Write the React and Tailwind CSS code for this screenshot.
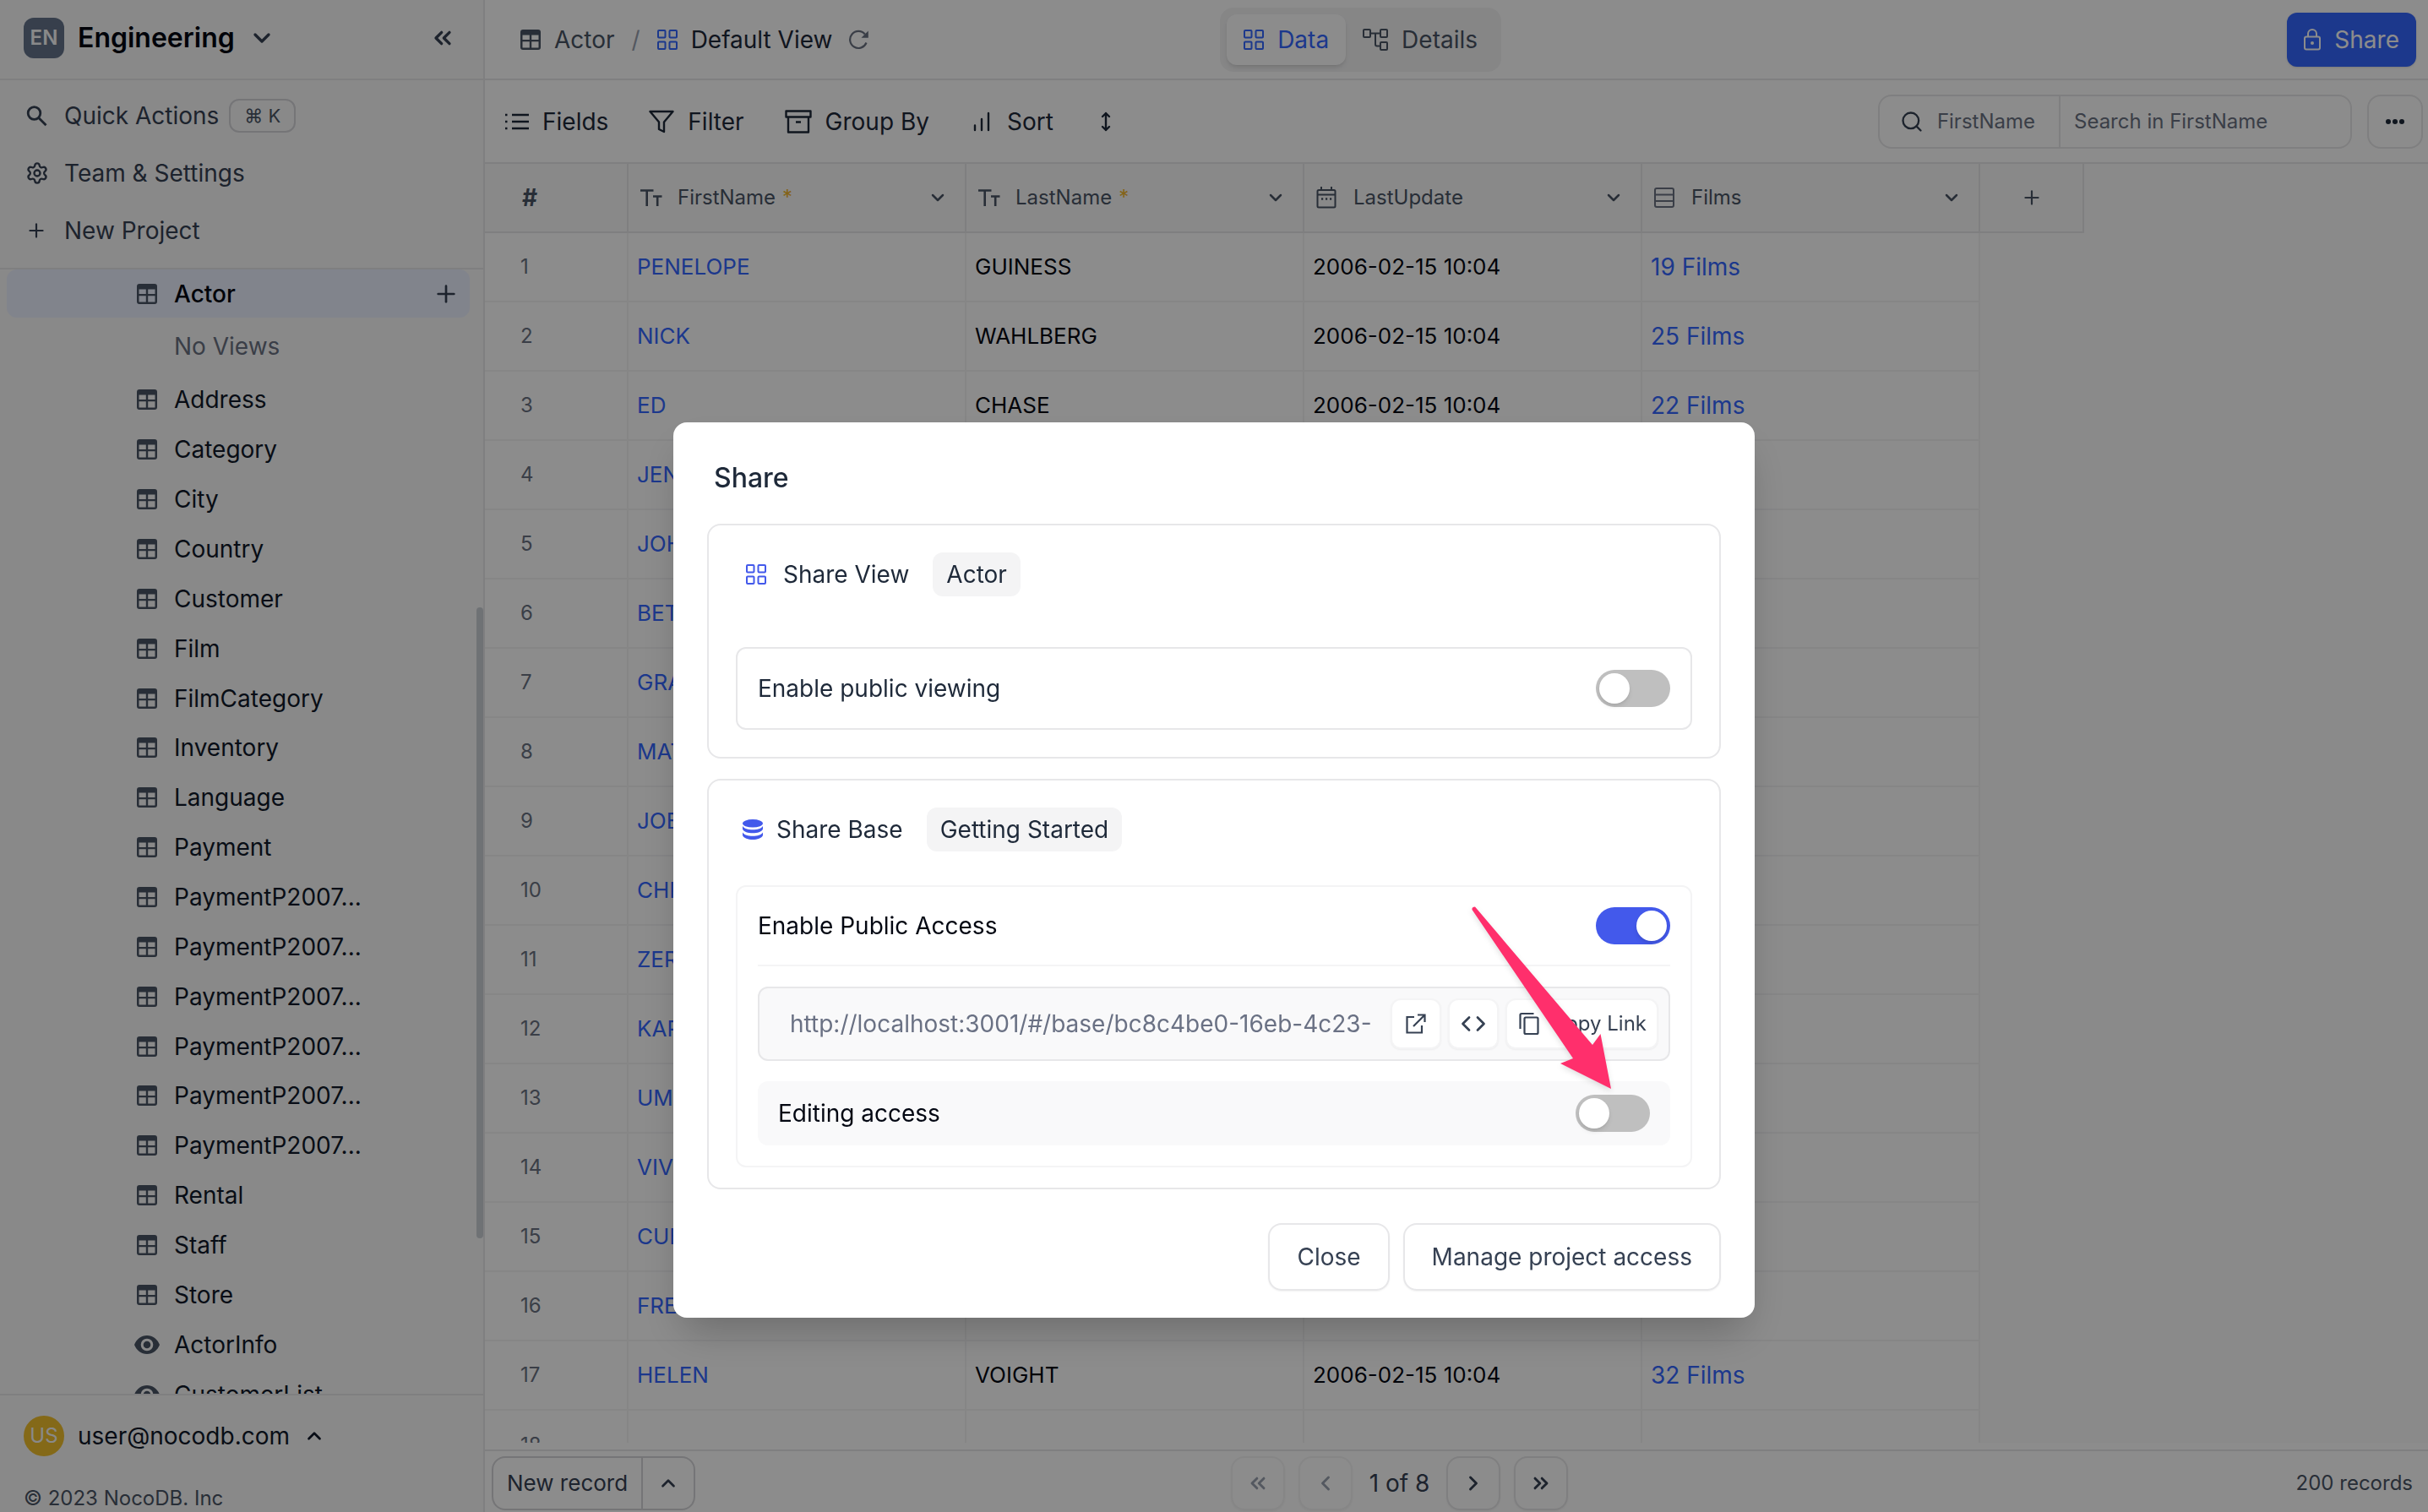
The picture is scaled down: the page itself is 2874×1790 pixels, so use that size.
import { useState } from "react";
import {
  ChevronDown,
  ChevronLeft,
  ChevronRight,
  ChevronUp,
  ChevronsLeft,
  ChevronsRight,
  Code,
  Plus,
  Search,
  Settings,
} from "lucide-react";

const tables = [
  "Address",
  "Category",
  "City",
  "Country",
  "Customer",
  "Film",
  "FilmCategory",
  "Inventory",
  "Language",
  "Payment",
  "PaymentP2007...",
  "PaymentP2007...",
  "PaymentP2007...",
  "PaymentP2007...",
  "PaymentP2007...",
  "PaymentP2007...",
  "Rental",
  "Staff",
  "Store",
];

const views = ["ActorInfo", "CustomerList"];

const actors = [
  ["PENELOPE", "GUINESS", 19],
  ["NICK", "WAHLBERG", 25],
  ["ED", "CHASE", 22],
  ["JENNIFER", "DAVIS", 22],
  ["JOHNNY", "LOLLOBRIGIDA", 29],
  ["BETTE", "NICHOLSON", 20],
  ["GRACE", "MOSTEL", 30],
  ["MATTHEW", "JOHANSSON", 20],
  ["JOE", "SWANK", 25],
  ["CHRISTIAN", "GABLE", 22],
  ["ZERO", "CAGE", 25],
  ["KARL", "BERRY", 31],
  ["UMA", "WOOD", 35],
  ["VIVIEN", "BERGEN", 30],
  ["CUBA", "OLIVIER", 28],
  ["FRED", "COSTNER", 27],
  ["HELEN", "VOIGHT", 32],
];

function TableIcon() {
  return (
    <svg viewBox="0 0 24 24" className="w-6 h-6 shrink-0" fill="currentColor">
      <path
        fillRule="evenodd"
        d="M3 0h18a3 3 0 0 1 3 3v18a3 3 0 0 1-3 3H3a3 3 0 0 1-3-3V3a3 3 0 0 1 3-3ZM2.500 6.500v5.500h8.300V6.500Zm10.700 0v5.500h8.300V6.500ZM2.500 14.300V21a.6.6 0 0 0 .6.6h7.700v-7.300Zm10.700 0v7.300h7.700a.6.6 0 0 0 .6-.6v-6.700Z"
      />
    </svg>
  );
}

function EyeIcon() {
  return (
    <svg viewBox="0 0 30 22" className="w-[30px] h-[22px] shrink-0" fill="currentColor">
      <path
        fillRule="evenodd"
        d="M15 0C8.200 0 2.400 4.500 0 11c2.400 6.500 8.200 11 15 11s12.600-4.500 15-11C27.600 4.500 21.800 0 15 0Zm0 18.300a7.300 7.300 0 1 1 0-14.600 7.300 7.300 0 0 1 0 14.600Z"
      />
      <circle cx="15" cy="11" r="4.300" />
    </svg>
  );
}

function QuickSearchIcon() {
  return (
    <svg viewBox="0 0 26 26" className="w-[26px] h-[26px] shrink-0" fill="none" stroke="currentColor" strokeWidth="2.800">
      <circle cx="10.500" cy="10" r="7.300" />
      <path d="m15.500 15.300 9 9" />
    </svg>
  );
}

function GridIcon() {
  return (
    <svg viewBox="0 0 24 24" className="w-6 h-6 shrink-0" fill="none" stroke="currentColor" strokeWidth="2">
      <rect x="1" y="1" width="8.500" height="8.500" rx="1" />
      <rect x="14.500" y="1" width="8.500" height="8.500" rx="1" />
      <rect x="1" y="14.500" width="8.500" height="8.500" rx="1" />
      <rect x="14.500" y="14.500" width="8.500" height="8.500" rx="1" />
    </svg>
  );
}

function DetailsIcon() {
  return (
    <svg viewBox="0 0 30 26" className="w-[30px] h-[26px] shrink-0" fill="none" stroke="currentColor" strokeWidth="2">
      <rect x="1" y="1" width="8" height="9" rx="1" />
      <rect x="21" y="1" width="8" height="9" rx="1" />
      <rect x="21" y="16" width="8" height="9" rx="1" />
      <path d="M9 5.500h12M15 5.500v13a2 2 0 0 0 2 2h4" />
    </svg>
  );
}

function ReloadIcon() {
  return (
    <svg viewBox="0 0 24 24" className="w-6 h-6 shrink-0" fill="none" stroke="currentColor" strokeWidth="2.200">
      <path d="M20.500 15.500A10 10 0 1 1 18.800 5.500" />
      <path d="M22.800 1.500v8.300h-8.300Z" fill="currentColor" stroke="none" />
    </svg>
  );
}

function FieldsIcon() {
  return (
    <svg viewBox="0 0 28 20" className="w-7 h-5 shrink-0" fill="none" stroke="currentColor" strokeWidth="2.400">
      <path d="M8 2h20M8 10h20M8 18h20M0 2h2.500M0 10h2.500M0 18h2.500" />
    </svg>
  );
}

function FilterIcon() {
  return (
    <svg viewBox="0 0 30 28" className="w-[30px] h-7 shrink-0" fill="none" stroke="currentColor" strokeWidth="2.400" strokeLinejoin="round">
      <path d="M1.500 2h27L18 14.500V26l-6-3v-8.500Z" />
    </svg>
  );
}

function GroupIcon() {
  return (
    <svg viewBox="0 0 32 28" className="w-8 h-7 shrink-0" fill="none" stroke="currentColor" strokeWidth="2.400" strokeLinejoin="round">
      <path d="M1.500 1.500h29v7h-29ZM4 8.500h24v18H4ZM13 14.500h6" />
    </svg>
  );
}

function SortIcon() {
  return (
    <svg viewBox="0 0 28 24" className="w-7 h-6 shrink-0" fill="none" stroke="currentColor" strokeWidth="2.400" strokeLinecap="round">
      <path d="M6 16.500V22M14 9v13M22 2v20" />
    </svg>
  );
}

function RowHeightIcon() {
  return (
    <svg viewBox="0 0 28 24" className="w-7 h-6 shrink-0" fill="none" stroke="currentColor" strokeWidth="2.400" strokeLinecap="round" strokeLinejoin="round">
      <path d="M14 2v20M10 6l4-4 4 4M10 18l4 4 4-4" />
    </svg>
  );
}

function TextTypeIcon() {
  return (
    <svg viewBox="0 0 26 20" className="w-[26px] h-5 shrink-0" fill="none" stroke="currentColor" strokeWidth="2.600">
      <path d="M0 1.500h15.500M7.700 1.500V20M15 8.500h10.500M20.200 8.500V20" />
    </svg>
  );
}

function CalendarIcon() {
  return (
    <svg viewBox="0 0 24 26" className="w-6 h-[26px] shrink-0" fill="none" stroke="currentColor" strokeWidth="2">
      <rect x="1.500" y="4" width="21" height="20.500" rx="1.500" />
      <path d="M1.500 9.500h21M6 0v4M18 0v4" />
      <path d="M6 14.500h2.200M11 14.500h2.200M16 14.500h2.200" strokeWidth="2.400" />
    </svg>
  );
}

function LinkTypeIcon() {
  return (
    <svg viewBox="0 0 24 24" className="w-6 h-6 shrink-0 text-gray-500" fill="none" stroke="currentColor" strokeWidth="2">
      <rect x="1" y="1" width="22" height="22" rx="2" />
      <path d="M1 8.500h22M1 16h22" />
    </svg>
  );
}

function LockIcon() {
  return (
    <svg viewBox="0 0 20 26" className="w-5 h-[26px] shrink-0" fill="none" stroke="currentColor" strokeWidth="2">
      <rect x="1" y="9.500" width="18" height="15" rx="2" />
      <path d="M5 9.500V6a5 5 0 0 1 10 0v3.500" />
      <circle cx="10" cy="17" r="2" fill="currentColor" stroke="none" />
    </svg>
  );
}

function DatabaseIcon() {
  return (
    <svg viewBox="0 0 24 24" className="w-6 h-6 shrink-0" fill="currentColor">
      <ellipse cx="12" cy="4.800" rx="12" ry="4.800" />
      <path d="M0 8c2 3 6.500 4.300 12 4.300S22 11 24 8v3.500c-1.500 3.300-6.500 4.800-12 4.800S1.500 14.800 0 11.500Z" />
      <path d="M0 15.500c2 3 6.500 4.300 12 4.300s10-1.300 12-4.300V19c-1.500 3.300-6.500 5-12 5S1.500 22.300 0 19Z" />
    </svg>
  );
}

function OpenIcon() {
  return (
    <svg viewBox="0 0 24 24" className="w-6 h-6 shrink-0" fill="none" stroke="currentColor" strokeWidth="2.200">
      <path d="M10 4H1.500v18.500H19V14M9 15 22.500 1.500M14 1.500h8.500V10" />
    </svg>
  );
}

function CopyIcon() {
  return (
    <svg viewBox="0 0 28 28" className="w-7 h-7 shrink-0" fill="none" stroke="currentColor" strokeWidth="2.200">
      <rect x="8.500" y="6.500" width="16" height="19.500" rx="1.500" />
      <path d="M3.500 20V3.500a1.500 1.500 0 0 1 1.500-1.500h14.500" />
    </svg>
  );
}

function SidebarAction({ icon, label, children }) {
  return (
    <button type="button" className="flex items-center h-[68px] pl-[30px] text-left">
      {icon}
      <span className="ml-5">{label}</span>
      {children}
    </button>
  );
}

function TreeRow({ icon, label }) {
  return (
    <a href="#" className="flex items-center pl-[154px] gap-5 text-gray-900">
      <span className="flex justify-center w-6 text-gray-600">{icon}</span>
      {label}
    </a>
  );
}

function Sidebar() {
  return (
    <aside className="flex flex-col w-[574px] shrink-0 bg-[#f9f9fa] border-r-2 border-[#e7e7e9] text-[28px] leading-9 text-gray-700">
      <div className="flex items-center h-[95px] shrink-0 border-b-2 border-[#e7e7e9] pl-7 pr-8 pb-1">
        <span className="flex items-center justify-center w-12 h-12 rounded-xl bg-[#64748b] text-[24px] font-semibold text-[#f9f9fa]">
          EN
        </span>
        <button type="button" className="flex items-center ml-4 gap-4 text-[32px] font-semibold text-gray-950">
          Engineering
          <ChevronDown size={32} strokeWidth={2.5} className="text-gray-700" />
        </button>
        <button type="button" aria-label="Collapse sidebar" className="ml-auto">
          <ChevronsLeft size={32} strokeWidth={2.5} />
        </button>
      </div>

      <div className="flex flex-col shrink-0 h-56 pt-2 border-b-2 border-[#e7e7e9]">
        <SidebarAction icon={<QuickSearchIcon />} label="Quick Actions">
          <kbd className="flex items-center h-10 ml-3 px-4 border-2 border-[#d5d5d9] rounded-xl font-[Inter] text-[22px] text-gray-600">
            ⌘ K
          </kbd>
        </SidebarAction>
        <SidebarAction icon={<Settings size={28} className="-mr-0.5" />} label="Team & Settings" />
        <SidebarAction icon={<Plus size={26} />} label="New Project" />
      </div>

      <nav className="relative flex-1 min-h-0 overflow-hidden pl-2 pr-4">
        <div className="flex items-center h-[57px] rounded-xl bg-[#ebf0ff] pr-3">
          <a href="#" className="flex flex-1 items-center gap-5 pl-[154px] font-medium text-gray-950">
            <span className="text-gray-600">
              <TableIcon />
            </span>
            Actor
          </a>
          <button type="button" aria-label="Add view">
            <Plus size={32} />
          </button>
        </div>
        <p className="flex items-center h-[68px] pl-[198px] text-gray-500">No Views</p>
        <div className="grid auto-rows-fr h-[1236px]">
          {tables.map((name, i) => (
            <TreeRow key={i} icon={<TableIcon />} label={name} />
          ))}
          {views.map((name) => (
            <TreeRow key={name} icon={<EyeIcon />} label={name} />
          ))}
        </div>
        <div className="absolute right-0 top-[400px] w-2 h-[747px] rounded-full bg-[#cbd0d6]" />
      </nav>

      <div className="shrink-0 h-[140px] border-t-2 border-[#e7e7e9] pl-7">
        <button type="button" className="flex items-center h-24 text-gray-900">
          <span className="flex items-center justify-center w-12 h-12 rounded-full bg-[#f0c02c] text-[24px] text-[#f9f9fa]">
            US
          </span>
          <span className="ml-4 mr-4">user@nocodb.com</span>
          <ChevronUp size={26} strokeWidth={2.5} />
        </button>
        <p className="pt-2 text-[24px] text-gray-600">© 2023 NocoDB. Inc</p>
      </div>
    </aside>
  );
}

function TopBar() {
  return (
    <header className="grid grid-cols-[13fr_auto_17fr] items-center h-[95px] shrink-0 border-b-2 border-[#e7e7e9] pl-[42px] pr-[14px]">
      <nav className="flex items-center">
        <a href="#" className="flex items-center gap-4 text-gray-600">
          <TableIcon />
          Actor
        </a>
        <span className="mx-5 text-gray-400">/</span>
        <a href="#" className="flex items-center gap-4 text-gray-800">
          <span className="text-[#3366ff]">
            <GridIcon />
          </span>
          Default View
        </a>
        <button type="button" aria-label="Reload" className="ml-5 text-gray-500">
          <ReloadIcon />
        </button>
      </nav>
      <div className="flex items-center h-[76px] rounded-2xl bg-[#f4f4f5] px-2">
        <button type="button" className="flex items-center h-[60px] gap-4 px-5 rounded-xl bg-white text-[#3366ff] shadow-md">
          <GridIcon />
          Data
        </button>
        <button type="button" className="flex items-center h-[60px] gap-4 px-5 text-gray-600">
          <DetailsIcon />
          Details
        </button>
      </div>
      <button type="button" className="justify-self-end flex items-center h-16 gap-4 px-5 rounded-xl bg-[#3366ff] text-white shadow-sm">
        <LockIcon />
        Share
      </button>
    </header>
  );
}

function ToolButton({ icon, label }) {
  return (
    <button type="button" className="flex items-center gap-4">
      {icon}
      {label}
    </button>
  );
}

function Toolbar() {
  return (
    <div className="flex items-center h-[99px] shrink-0 border-b-2 border-[#e7e7e9] pl-6 pr-[6px] text-gray-800">
      <div className="flex items-center gap-12">
        <ToolButton icon={<FieldsIcon />} label="Fields" />
        <ToolButton icon={<FilterIcon />} label="Filter" />
        <ToolButton icon={<GroupIcon />} label="Group By" />
        <ToolButton icon={<SortIcon />} label="Sort" />
        <button type="button" aria-label="Row height">
          <RowHeightIcon />
        </button>
      </div>
      <div className="flex items-center h-16 ml-auto border-2 border-[#e7e7e9] rounded-2xl">
        <button type="button" className="flex items-center h-full pl-6 pr-7 gap-4 border-r-2 border-[#e7e7e9] text-[24px] text-gray-500">
          <Search size={28} className="text-gray-700" />
          FirstName
        </button>
        <input
          type="text"
          aria-label="Search in FirstName"
          placeholder="Search in FirstName"
          className="w-[343px] h-full px-4 text-[24px] placeholder:text-gray-500 outline-none"
        />
      </div>
      <button type="button" aria-label="More" className="flex items-center justify-center w-[66px] h-16 ml-[18px] border-2 border-[#e7e7e9] rounded-2xl">
        <svg viewBox="0 0 22 6" className="w-[22px] h-[6px]" fill="currentColor">
          <circle cx="3" cy="3" r="3" />
          <circle cx="11" cy="3" r="3" />
          <circle cx="19" cy="3" r="3" />
        </svg>
      </button>
    </div>
  );
}

function HeaderCell({ icon, label, required }) {
  return (
    <th className="border-r-2 border-b-2 border-[#e7e7e9] font-normal text-left">
      <div className="flex items-center pl-[14px] pr-5">
        <span className="flex w-[26px]">{icon}</span>
        <span className="ml-[18px]">{label}</span>
        {required && <span className="ml-2 text-[#f0b429]">*</span>}
        <ChevronDown size={24} strokeWidth={2.5} className="ml-auto" />
      </div>
    </th>
  );
}

function Grid() {
  return (
    <div className="flex-1 min-h-0 mb-2 overflow-hidden bg-[#fcfcfc]">
      <table className="w-[1893px] table-fixed border-separate border-spacing-0">
        <colgroup>
          <col className="w-[170px]" />
          <col className="w-[400px]" />
          <col className="w-[400px]" />
          <col className="w-[400px]" />
          <col className="w-[400px]" />
          <col className="w-[123px]" />
        </colgroup>
        <thead className="bg-[#f9f9fa] text-[24px] text-gray-600">
          <tr className="h-[82px]">
            <th className="pl-[44px] border-r-2 border-b-2 border-[#e7e7e9] text-left text-[28px] font-bold">#</th>
            <HeaderCell icon={<TextTypeIcon />} label="FirstName" required />
            <HeaderCell icon={<TextTypeIcon />} label="LastName" required />
            <HeaderCell icon={<CalendarIcon />} label="LastUpdate" />
            <HeaderCell icon={<LinkTypeIcon />} label="Films" />
            <th className="border-r-2 border-b-2 border-[#e7e7e9]">
              <button type="button" aria-label="Add field" className="block mx-auto">
                <Plus size={26} />
              </button>
            </th>
          </tr>
        </thead>
        <tbody className="text-[26px] text-gray-950">
          {actors.map(([first, last, films], i) => (
            <tr key={first} className="h-[82px] bg-white">
              <td className="pl-[42px] border-r-2 border-b-2 border-[#f4f4f5] text-[24px] text-gray-500">{i + 1}</td>
              <td className="pl-[10px] border-r-2 border-b-2 border-[#f4f4f5] text-[#3366ff]">{first}</td>
              <td className="pl-[10px] border-r-2 border-b-2 border-[#f4f4f5]">{last}</td>
              <td className="pl-[10px] border-r-2 border-b-2 border-[#f4f4f5]">2006-02-15 10:04</td>
              <td className="pl-[10px] border-r-2 border-b-2 border-[#f4f4f5] text-[28px]">
                <a href="#" className="text-[#3366ff]">{films} Films</a>
              </td>
            </tr>
          ))}
          <tr className="h-[82px] bg-white">
            <td className="pl-[42px] border-r-2 border-[#f4f4f5] text-[24px] text-gray-500">18</td>
            <td className="border-r-2 border-[#f4f4f5]" />
            <td className="border-r-2 border-[#f4f4f5]" />
            <td className="border-r-2 border-[#f4f4f5]" />
            <td className="border-r-2 border-[#f4f4f5]" />
          </tr>
        </tbody>
      </table>
    </div>
  );
}

function PageButton({ label, disabled, children }) {
  return (
    <button
      type="button"
      aria-label={label}
      disabled={disabled}
      className="flex items-center justify-center w-16 h-16 border-2 border-[#e7e7e9] rounded-2xl shadow-xs disabled:text-gray-400 disabled:border-[#f4f4f5]"
    >
      {children}
    </button>
  );
}

function Footer() {
  return (
    <footer className="grid grid-cols-[7fr_auto_8fr] items-center h-[74px] shrink-0 border-t-2 border-[#e7e7e9] pl-2 pr-[18px] pt-1 text-gray-700">
      <div className="justify-self-start flex items-center h-16 border-2 border-[#d5d5d9] rounded-2xl">
        <button type="button" className="h-full px-4 border-r-2 border-[#d5d5d9] text-[26px]">
          New record
        </button>
        <button type="button" aria-label="More options" className="flex items-center justify-center w-[60px] h-full">
          <ChevronUp size={26} strokeWidth={2.5} />
        </button>
      </div>
      <div className="flex items-center gap-4">
        <PageButton label="First page" disabled>
          <ChevronsLeft size={28} strokeWidth={2.5} />
        </PageButton>
        <PageButton label="Previous page" disabled>
          <ChevronLeft size={28} strokeWidth={2.5} />
        </PageButton>
        <span className="px-1">1 of 8</span>
        <PageButton label="Next page">
          <ChevronRight size={28} strokeWidth={2.5} />
        </PageButton>
        <PageButton label="Last page">
          <ChevronsRight size={28} strokeWidth={2.5} />
        </PageButton>
      </div>
      <span className="justify-self-end text-[24px] text-gray-600">200 records</span>
    </footer>
  );
}

function Toggle({ id, checked, onChange }) {
  return (
    <input
      id={id}
      type="checkbox"
      role="switch"
      checked={checked}
      onChange={(e) => onChange(e.target.checked)}
      className="appearance-none w-[88px] h-11 p-1 rounded-full bg-[#bfbfbf] checked:bg-[#4359eb] before:block before:w-9 before:h-9 before:rounded-full before:bg-white before:shadow-md checked:before:translate-x-11"
    />
  );
}

function ShareModal() {
  const [publicView, setPublicView] = useState(false);
  const [publicBase, setPublicBase] = useState(true);
  const [editing, setEditing] = useState(false);

  return (
    <div
      role="dialog"
      aria-labelledby="share-title"
      className="w-full max-w-[1280px] px-10 pt-10 pb-8 rounded-2xl bg-white text-[28px] leading-9 text-gray-800 shadow-2xl"
    >
      <h2 id="share-title" className="pl-2 pt-1 text-[32px] leading-[44px] font-medium">Share</h2>

      <section className="mt-8 px-8 pt-8 pb-8 border-2 border-[#e7e7e9] rounded-2xl">
        <div className="flex items-center h-[52px] pl-3">
          <span className="text-[#4359eb]">
            <GridIcon />
          </span>
          <span className="ml-5">Share View</span>
          <span className="flex items-center h-[52px] ml-7 px-4 rounded-xl bg-[#f4f4f5]">Actor</span>
        </div>
        <div className="flex items-center justify-between h-[98px] mt-[60px] px-6 border-2 border-[#e7e7e9] rounded-xl">
          <label htmlFor="public-view">Enable public viewing</label>
          <Toggle id="public-view" checked={publicView} onChange={setPublicView} />
        </div>
      </section>

      <section className="mt-6 px-8 pt-8 pb-6 border-2 border-[#e7e7e9] rounded-2xl">
        <div className="flex items-center h-[52px] pl-2">
          <span className="text-[#4359eb]">
            <DatabaseIcon />
          </span>
          <span className="ml-4">Share Base</span>
          <span className="flex items-center h-[52px] ml-7 px-4 rounded-xl bg-[#f4f4f5]">Getting Started</span>
        </div>
        <div className="mt-10 p-6 border-2 border-[#f4f4f5] rounded-xl text-gray-950">
          <div className="flex items-center justify-between h-[70px] pb-6 border-b-2 border-[#f4f4f5]">
            <label htmlFor="public-base">Enable Public Access</label>
            <Toggle id="public-base" checked={publicBase} onChange={setPublicBase} />
          </div>
          <div className="flex items-center h-[88px] mt-6 pl-9 pr-3 gap-2 border-2 border-[#e7e7e9] rounded-xl bg-[#f9f9fa] text-gray-700">
            <input
              readOnly
              aria-label="Public link"
              value="http://localhost:3001/#/base/bc8c4be0-16eb-4c23-"
              className="flex-1 min-w-0 text-[#6a7184] outline-none"
            />
            <button type="button" aria-label="Open link" className="flex items-center justify-center w-[60px] h-[60px] border-2 border-[#f4f4f5] rounded-xl bg-white shadow-xs">
              <OpenIcon />
            </button>
            <button type="button" aria-label="Embed code" className="flex items-center justify-center w-[60px] h-[60px] border-2 border-[#f4f4f5] rounded-xl bg-white shadow-xs">
              <Code size={30} strokeWidth={2.2} />
            </button>
            <button type="button" className="flex items-center h-[60px] px-3 gap-3 border-2 border-[#f4f4f5] rounded-xl bg-white text-[24px] shadow-xs">
              <CopyIcon />
              Copy Link
            </button>
          </div>
          <div className="flex items-center justify-between h-[76px] mt-6 px-6 rounded-xl bg-[#f9f9fa]">
            <label htmlFor="editing">Editing access</label>
            <Toggle id="editing" checked={editing} onChange={setEditing} />
          </div>
        </div>
      </section>

      <div className="flex justify-end gap-4 mt-10 text-gray-700">
        <button type="button" className="h-20 px-8 border-2 border-[#e7e7e9] rounded-2xl shadow-xs">Close</button>
        <button type="button" className="h-20 px-8 border-2 border-[#e7e7e9] rounded-2xl shadow-xs">Manage project access</button>
      </div>
    </div>
  );
}

function Pointer() {
  return (
    <svg
      viewBox="0 0 170 220"
      className="absolute left-[944px] top-[572px] w-[170px] h-[220px] pointer-events-none drop-shadow-md"
      fill="#ff2f6c"
    >
      <path d="M1.500 5Q1 1.500 5 1.500L144 165l9.500-13 12.500 65L106 187l15-6Z" />
    </svg>
  );
}

export default function App() {
  return (
    <div className="flex h-screen overflow-hidden bg-white font-[Inter,sans-serif] text-[28px] leading-9">
      <Sidebar />
      <main className="flex flex-col flex-1 min-w-0">
        <TopBar />
        <Toolbar />
        <Grid />
        <Footer />
      </main>
      <div className="fixed inset-0 flex justify-center items-start pt-[500px] bg-black/45">
        <div className="relative w-full max-w-[1280px]">
          <ShareModal />
          <Pointer />
        </div>
      </div>
    </div>
  );
}
